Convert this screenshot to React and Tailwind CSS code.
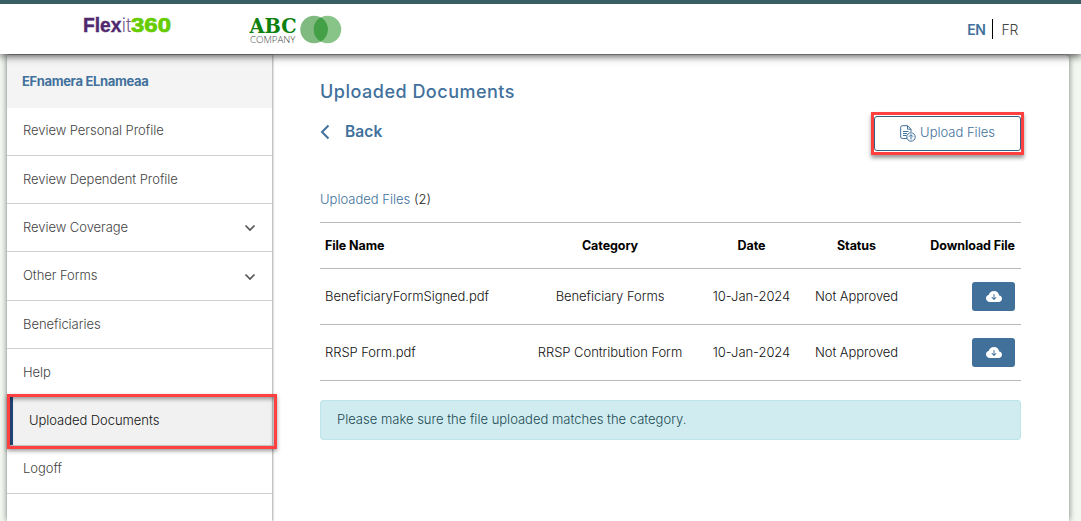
import { BsCloudArrowDownFill } from "react-icons/bs";

const menu = [
  { label: "Review Personal Profile" },
  { label: "Review Dependent Profile" },
  { label: "Review Coverage", expandable: true },
  { label: "Other Forms", expandable: true },
  { label: "Beneficiaries" },
  { label: "Help" },
  { label: "Uploaded Documents", active: true },
  { label: "Logoff" },
];

const files = [
  { name: "BeneficiaryFormSigned.pdf", category: "Beneficiary Forms", date: "10-Jan-2024", status: "Not Approved" },
  { name: "RRSP Form.pdf", category: "RRSP Contribution Form", date: "10-Jan-2024", status: "Not Approved" },
];

const columns = "grid grid-cols-[195px_190px_93px_117px_106px] items-center border-b border-[#b9b9b9]";

function FlexitLogo() {
  return (
    <svg className="block" width="92" height="24" viewBox="0 0 92 24" fontFamily="'Liberation Sans', Arial, sans-serif" fontSize="20">
      <text x="0" y="17.500" fontWeight="700" fill="#50286f" stroke="#50286f" strokeWidth="0.4" textLength="38.5" lengthAdjust="spacingAndGlyphs">Flex</text>
      <text x="38.8" y="17.500" fill="#765c8b" fontFamily="Inter, sans-serif" fontWeight="300" fontSize="19" textLength="9.5" lengthAdjust="spacingAndGlyphs">it</text>
      <text x="48" y="17.500" fontWeight="700" fill="#66cc00" stroke="#66cc00" strokeWidth="0.7" textLength="40" lengthAdjust="spacingAndGlyphs">360</text>
    </svg>
  );
}

function CompanyLogo() {
  return (
    <svg className="block" width="94" height="30" viewBox="0 0 94 30">
      <text x="0.500" y="17.500" fontFamily="'DejaVu Serif', serif" fontWeight="700" fontSize="21" fill="#0d800d" textLength="47" lengthAdjust="spacingAndGlyphs">ABC</text>
      <text x="1" y="27.500" fontFamily="'Open Sans', sans-serif" fontSize="9.5" fill="#444" textLength="45.5" lengthAdjust="spacingAndGlyphs">COMPANY</text>
      <circle cx="65" cy="14.500" r="13.7" fill="#80ba80" />
      <circle cx="78.500" cy="14.500" r="13.7" fill="#128a12" fillOpacity="0.5" />
      <path d="M71.750 2.580a13.700 13.700 0 0 1 0 23.840a13.700 13.700 0 0 1 0-23.840z" fill="#43a047" />
    </svg>
  );
}

function Chevron() {
  return (
    <svg className="mt-px" width="12" height="8" viewBox="0 0 12 8" fill="none" stroke="#555" strokeWidth="1.7">
      <path d="M1.500 1.500 6 6l4.500-4.500" />
    </svg>
  );
}

function UploadIcon() {
  return (
    <svg width="16" height="17" viewBox="0 0 16 17" fill="none" stroke="#41719c" strokeWidth="1">
      <path d="M7 13.500H2.200Q.7 13.500.7 12V2.200Q.7.700 2.200.700H7.500L11 4.200V7" />
      <path d="M7.500.700V4.200H11M3 6.500h5.500M3 8.500h4M3 10.500h3.500" />
      <circle cx="11" cy="12" r="4.200" />
      <path d="M11 14.500V9.800M9 11.700l2-2 2 2" />
    </svg>
  );
}

export default function App() {
  return (
    <div className="flex h-[521px] w-[1081px] flex-col overflow-hidden bg-[#f3f8f1] font-[Inter,sans-serif] text-[13px] font-light text-[#111]">
      <header className="relative z-10 flex h-[54px] shrink-0 items-start border-t-4 border-[#3a5f62] bg-white pl-[83px] shadow-[0_2px_8px_rgba(0,0,0,0.7)]">
        <div className="mt-[10px] w-[166px]"><FlexitLogo /></div>
        <div className="mt-[11px]"><CompanyLogo /></div>
        <div className="mt-[15px] ml-auto flex h-5 items-center pr-[63px] text-[14px]">
          <span className="pr-[7px] font-semibold tracking-[-0.500px] text-[#41719c]">EN</span>
          <span className="flex h-5 items-center border-l border-black pl-2 tracking-[-0.300px] text-[#444]">FR</span>
        </div>
      </header>

      <div className="mt-px mr-3 ml-[7px] flex min-h-0 flex-1 rounded-t bg-white shadow-[0_0_6px_rgba(0,0,0,0.5)]">
        <aside className="w-[265px] shrink-0 shadow-[1px_0_2px_rgba(0,0,0,0.35)]">
          <div className="flex h-[52.500px] items-center bg-[#f4f4f4] pl-4 font-bold tracking-[-0.320px] text-[#41719c]"><span className="-ml-px pt-px">EFnamera ELnameaa</span></div>
          {menu.map((item) =>
            item.active ? (
              <div key={item.label} className="relative flex h-[48.300px] items-center border-b border-[#d0d0d0] bg-[#f1f1f1] pl-[22px] text-[#111]">
                <span className="absolute top-0 bottom-0 left-[3px] w-[3px] bg-[#254a80]" />
                <span className="tracking-[-0.050px]">{item.label}</span>
                <span className="absolute -top-[3px] -bottom-[4px] left-0 z-10 w-[270px] border-3 border-[#ff4040] shadow-[0_2px_4px_rgba(0,0,0,0.4),inset_0_2px_4px_rgba(0,0,0,0.4)]" />
              </div>
            ) : (
              <div key={item.label} className="flex h-[48.300px] items-center justify-between border-b border-[#d0d0d0] pr-4 pl-4 tracking-[-0.050px] text-[#444]">
                {item.label}
                {item.expandable && <Chevron />}
              </div>
            )
          )}
        </aside>

        <main className="w-[749px] pl-12">
          <div className="flex h-[167px] flex-col">
            <h1 className="mt-[24px] pt-px text-[18px] leading-6 font-medium tracking-[0.500px] text-[#41719c]">Uploaded Documents</h1>
            <div className="mt-[8px] flex h-[43px] items-start justify-between">
              <button className="mt-[10px] flex h-5 items-center gap-[15px] text-[15.500px] font-semibold tracking-[0.100px] text-[#41719c]">
                <svg width="10" height="16" viewBox="0 0 10 16" fill="none" stroke="currentColor" strokeWidth="2">
                  <path d="M8.500 1.500 2 8l6.500 6.500" />
                </svg>
                Back
              </button>
              <div className="-mr-[3px] ml-auto h-[43px] w-[153px] border-3 border-[#ff4040] bg-white pt-px pb-px shadow-[0_3px_4px_rgba(0,0,0,0.4)]">
                <button className="flex h-full w-full items-center justify-center gap-1 rounded-[3px] border border-[#315f80] text-[#41719c]">
                  <UploadIcon />
                  <span className="pb-[2px]">Upload Files</span>
                </button>
              </div>
            </div>
            <p className="mt-[34px] leading-5 text-[#41719c]">
              Uploaded Files <span className="text-[#222]">(2)</span>
            </p>
          </div>

          <div className="w-[701px] border-t border-[#b9b9b9]">
            <div className={`${columns} h-[46px] pt-[2px] text-center text-[12.500px] font-bold tracking-[-0.080px] text-black`}>
              <span className="pl-[5px] text-left">File Name</span>
              <span>Category</span>
              <span>Date</span>
              <span>Status</span>
              <span className="pr-[6px] text-right whitespace-nowrap">Download File</span>
            </div>
            {files.map((file) => (
              <div key={file.name} className={`${columns} h-[56px] text-center tracking-[-0.050px]`}>
                <span className="pl-[5px] text-left">{file.name}</span>
                <span>{file.category}</span>
                <span>{file.date}</span>
                <span>{file.status}</span>
                <span className="flex justify-end pr-[6px]">
                  <button className="flex h-[29px] w-[43px] items-center justify-center rounded-[3px] bg-[#41719a] text-white">
                    <BsCloudArrowDownFill size={16} />
                  </button>
                </span>
              </div>
            ))}
          </div>

          <div className="mt-[19px] flex h-10 w-[701px] items-center rounded-[3px] border border-[#bee5eb] bg-[#d1ecf1] pb-px pl-4 text-[#204b52]">
            Please make sure the file uploaded matches the category.
          </div>
        </main>
      </div>
    </div>
  );
}
